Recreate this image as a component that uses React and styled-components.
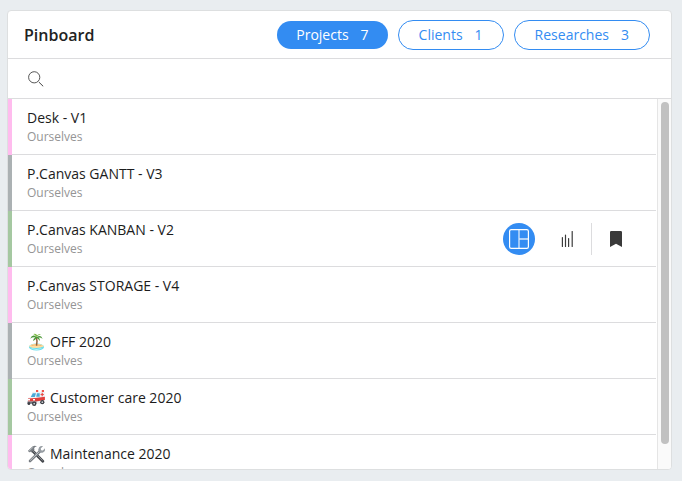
import React, { useState } from "react";
import styled, { createGlobalStyle, css } from "styled-components";

const GlobalStyle = createGlobalStyle`
  * { box-sizing: border-box; }
  body {
    margin: 0;
    background: #e9edf0;
    color: #222;
    font-family: "Open Sans", "Noto Sans", sans-serif;
  }
  button, input { font: inherit; color: inherit; }
`;

const Page = styled.main`
  display: flex;
  height: 100vh;
  min-height: 240px;
  padding: 10px 10px 11px 7px;
`;

const Card = styled.section`
  flex: 1;
  min-width: 0;
  display: flex;
  flex-direction: column;
  overflow: hidden;
  background: #fff;
  border: 1px solid #dddfe0;
  border-radius: 4px;
`;

const Header = styled.header`
  display: flex;
  align-items: center;
  justify-content: space-between;
  flex: none;
  height: 48px;
  padding: 0 21px 0 16px;
  border-bottom: 1px solid #dcdcde;
`;

const Title = styled.h1`
  margin: 0;
  font-size: 16px;
  line-height: 24px;
  font-weight: 600;
`;

const Tabs = styled.nav`
  display: flex;
  align-items: center;
  gap: 10px;
`;

const Tab = styled.button`
  display: flex;
  align-items: center;
  gap: 12px;
  height: 30px;
  padding: 0 20px;
  border: 1px solid #338cf2;
  border-radius: 15px;
  background: #fff;
  color: #338cf2;
  font-size: 14px;
  line-height: 20px;
  cursor: pointer;
  ${(p) =>
    p.$active &&
    css`
      height: 28px;
      padding: 0 19px;
      border: 0;
      background: #338cf2;
      color: #fff;
      font-weight: 500;
    `}
`;

const SearchBar = styled.label`
  display: flex;
  align-items: center;
  flex: none;
  gap: 8px;
  height: 40px;
  padding: 0 20px;
  border-bottom: 1px solid #dcdcde;
`;

const SearchInput = styled.input`
  flex: 1;
  min-width: 0;
  border: 0;
  outline: 0;
  background: transparent;
  font-size: 14px;
`;

const Body = styled.div`
  flex: 1;
  min-height: 0;
  display: flex;
`;

const List = styled.ul`
  flex: 1;
  min-width: 0;
  margin: 0;
  padding: 0;
  list-style: none;
  overflow-y: auto;
  scrollbar-width: none;
`;

const Row = styled.li`
  display: flex;
  align-items: center;
  justify-content: space-between;
  height: 56px;
  padding: 0 25px 0 15px;
  border-left: 4px solid ${(p) => p.$color};
  background: linear-gradient(#dcdcde, #dcdcde) bottom left / calc(100% - 1px) 1px no-repeat;
`;

const RowText = styled.div`
  min-width: 0;
  padding-bottom: 2px;
`;

const RowTitle = styled.div`
  display: flex;
  align-items: center;
  gap: 4px;
  font-size: 14px;
  line-height: 20px;
  color: #1c1c1c;
`;

const RowOwner = styled.div`
  font-size: 12px;
  line-height: 17px;
  color: #959595;
`;

const Actions = styled.div`
  display: flex;
  align-items: center;
`;

const IconButton = styled.button`
  display: grid;
  place-items: center;
  width: 32px;
  height: 32px;
  padding: 0;
  border: 0;
  border-radius: 50%;
  background: ${(p) => (p.$filled ? "#338cf2" : "transparent")};
  cursor: pointer;
`;

const ActionGroup = styled.div`
  display: flex;
  gap: 16px;
  padding-right: 8px;
  margin-right: 8px;
  border-right: 1px solid #dcdcde;
`;

const Rail = styled.div`
  flex: none;
  width: 14px;
  padding: 3px 2px 3px 3px;
  background: #fafafa;
  border-left: 1px solid #e5e5e5;
`;

const Thumb = styled.div`
  height: 94%;
  width: 8px;
  border-radius: 4px;
  background: #c1c1c1;
`;

const SearchIcon = () => (
  <svg width="16" height="16" viewBox="0 0 16 16" fill="none" stroke="#444" aria-hidden="true">
    <circle cx="6.2" cy="6.3" r="5.6" strokeWidth="0.9" />
    <path d="M10.8 11 L15.2 15.3" strokeWidth="1" />
  </svg>
);

const BoardIcon = () => (
  <svg width="20" height="20" viewBox="0 0 20 20" fill="none" stroke="#fff" aria-hidden="true">
    <rect x="0.6" y="0.6" width="18.8" height="18.8" rx="1.6" strokeWidth="1.2" />
    <path d="M10 1v18M10 10h9" strokeWidth="1.3" strokeOpacity="0.8" />
  </svg>
);

const BarsIcon = () => (
  <svg width="12" height="16" viewBox="0 0 12 16" stroke="#3c3c3c" aria-hidden="true">
    <path d="M1.4 6.5v9M4.5 4v11.5M7.6 7.5v8M11.2 0.5v15" strokeWidth="1.2" strokeLinecap="round" />
  </svg>
);

const BookmarkIcon = () => (
  <svg width="12" height="16" viewBox="0 0 12 16" fill="#3a3a3a" aria-hidden="true">
    <path d="M1.2 0h9.6Q12 0 12 1.2V16L6 12.8 0 16V1.2Q0 0 1.2 0Z" />
  </svg>
);

const IslandIcon = () => (
  <svg width="19" height="18" viewBox="0 0 19 18" aria-hidden="true">
    <ellipse cx="9.5" cy="14" rx="7.6" ry="3.5" fill="#67dced" />
    <path d="M3 14.8Q9.5 19 16 14.8Q9.5 17 3 14.8Z" fill="#b8f4f5" />
    <path d="M2 13.5Q3.5 10.7 9 10.7Q15.2 10.7 17 13.3Q14 15 9.5 15Q5 15 2 13.5Z" fill="#ffdfa0" />
    <path d="M4.5 12.6Q9 10.8 14.5 12.7" stroke="#f5b978" strokeWidth="1" fill="none" />
    <path d="M9.2 4.2Q10.8 8 9.5 12.8" stroke="#92633e" strokeWidth="1.5" fill="none" />
    <path d="M9.5 4Q5.5 .4 3.2 5.7Q6 3.8 8.4 4.6Q6.3 5.6 6 8Q8.5 6.8 9.5 4.9Q11.7 6 12.8 8.1Q13.4 5.8 11.4 4.6Q14 4.2 15.5 6Q14.3 1.2 9.5 4Z" fill="#4c9838" />
    <path d="M9.4 4Q8 1.3 6.3 1Q9 0 10.2 2.2Q12.2 .4 14 1.8Q11.1 1.9 9.4 4Z" fill="#79b841" />
  </svg>
);

const AmbulanceIcon = () => (
  <svg width="19" height="18" viewBox="0 0 19 18" aria-hidden="true">
    <path d="M5.2 3.6Q5.6 2.8 6.5 2.8H17.7V12.8L14 15H1Q.2 11 1 9L3.5 8Z" fill="#eef1f4" />
    <path d="M9 1h2.2v2H9zM14.8 1H17v2h-2.2z" fill="#f05249" />
    <path d="M5.8 4.2H9L7.8 8H3.8ZM10 4.2h2.7v3.6H9.2Z" fill="#4aa9d7" />
    <path d="M1 9.5L8.5 9 17.9 7.7V11L9 12.5H1Z" fill="#e13f3b" />
    <path d="M15.2 3.8v3.4M13.6 5.5h3.2" stroke="#ea4c45" strokeWidth="1.2" />
    <path d="M.5 12.4h9v2.3h-9z" fill="#70757c" />
    <path d="M1 10.7h2M6 10.7h2" stroke="#fff" strokeWidth="1.4" />
    <circle cx="7.2" cy="14.7" r="2.2" fill="#3b3d43" />
    <circle cx="7.2" cy="14.7" r=".9" fill="#c6cbd0" />
    <circle cx="15.3" cy="13.2" r="2.1" fill="#3b3d43" />
    <circle cx="15.3" cy="13.2" r=".9" fill="#c6cbd0" />
    <circle cx="1.9" cy="14.7" r="1.4" fill="#3b3d43" />
  </svg>
);

const ToolsIcon = () => (
  <svg width="19" height="18" viewBox="0 0 19 18" fill="none" aria-hidden="true">
    <path d="M5 5.2L15.8 16.2" stroke="#45484d" strokeWidth="2.8" strokeLinecap="round" />
    <path d="M5.2 5L15.5 15.5" stroke="#8f9499" strokeWidth="1" />
    <path d="M1 5.7L5.8 1.3Q7.8 .1 10 1.3Q7.6 1.8 7 3.3L7.7 4.2 4.3 7.5 3.1 6.6 2.2 7.4Z" fill="#777c82" />
    <path d="M2.2 5.8L6.3 2.1" stroke="#b8bdc0" strokeWidth=".9" />
    <path d="M13 6.3L3 16" stroke="#777c82" strokeWidth="2.6" strokeLinecap="round" />
    <path d="M13 6L3.2 15.5" stroke="#c5cacd" strokeWidth="1" />
    <path d="M16.1 1.1L13.7 3.5 14.1 5.2 15.8 5.5 18 3.2Q18.6 6.1 16.4 7.3Q14.2 8.6 12.1 6.9Q10.5 4.5 12.1 2.3Q13.7 .5 16.1 1.1Z" fill="#969ca2" />
  </svg>
);

const tabs = [
  { name: "Projects", count: 7 },
  { name: "Clients", count: 1 },
  { name: "Researches", count: 3 },
];

const pink = "#ffbcee";
const gray = "#abb1b3";
const green = "#a5c8a1";

const projects = [
  { title: "Desk - V1", color: pink },
  { title: "P.Canvas GANTT - V3", color: gray },
  { title: "P.Canvas KANBAN - V2", color: green, actions: true },
  { title: "P.Canvas STORAGE - V4", color: pink },
  { title: "OFF 2020", color: gray, Icon: IslandIcon },
  { title: "Customer care 2020", color: green, Icon: AmbulanceIcon },
  { title: "Maintenance 2020", color: pink, Icon: ToolsIcon },
];

const RowActions = () => (
  <Actions>
    <ActionGroup>
      <IconButton $filled aria-label="Open board"><BoardIcon /></IconButton>
      <IconButton aria-label="Statistics"><BarsIcon /></IconButton>
    </ActionGroup>
    <IconButton aria-label="Bookmark"><BookmarkIcon /></IconButton>
  </Actions>
);

export default function App() {
  const [active, setActive] = useState("Projects");
  return (
    <Page>
      <GlobalStyle />
      <Card>
        <Header>
          <Title>Pinboard</Title>
          <Tabs aria-label="Pinboard sections">
            {tabs.map(({ name, count }) => (
              <Tab
                key={name}
                $active={name === active}
                aria-pressed={name === active}
                onClick={() => setActive(name)}
              >
                <span>{name}</span>
                <span>{count}</span>
              </Tab>
            ))}
          </Tabs>
        </Header>
        <SearchBar>
          <SearchIcon />
          <SearchInput type="text" aria-label="Search" />
        </SearchBar>
        <Body>
          <List>
            {projects.map(({ title, color, actions, Icon }) => (
              <Row key={title} $color={color}>
                <RowText>
                  <RowTitle>
                    {Icon && <Icon />}
                    <span>{title}</span>
                  </RowTitle>
                  <RowOwner>Ourselves</RowOwner>
                </RowText>
                {actions && <RowActions />}
              </Row>
            ))}
          </List>
          <Rail aria-hidden="true">
            <Thumb />
          </Rail>
        </Body>
      </Card>
    </Page>
  );
}
